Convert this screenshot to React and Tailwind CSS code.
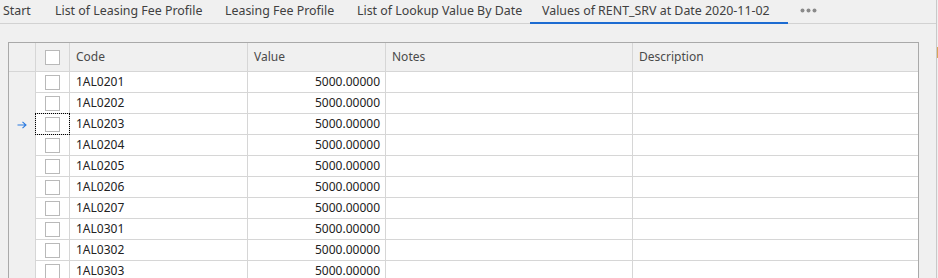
import React from "react";

const tabs = [
  { label: "Start", w: "w-[43px]", active: false },
  { label: "List of Leasing Fee Profile", w: "w-[170px]", active: false },
  { label: "Leasing Fee Profile", w: "w-[132px]", active: false },
  { label: "List of Lookup Value By Date", w: "w-[185px]", active: false },
  { label: "Values of RENT_SRV at Date 2020-11-02", w: "w-[258px]", active: true },
];

const codes = [
  "1AL0201",
  "1AL0202",
  "1AL0203",
  "1AL0204",
  "1AL0205",
  "1AL0206",
  "1AL0207",
  "1AL0301",
  "1AL0302",
  "1AL0303",
];

const CheckBox = () => (
  <div className="w-[15px] h-[15px] bg-white border border-[#b9b9b9]" />
);

const App = () => {
  return (
    <div
      className="relative w-[938px] h-[278px] overflow-hidden bg-[#f0f0f0] text-[12px] text-[#222]"
      style={{ fontFamily: '"Noto Sans", "Open Sans", sans-serif' }}
    >
      {/* Tab strip */}
      <div className="flex h-[24px] w-[936px] border-b border-[#d2d2d2]">
        {tabs.map((t, i) => (
          <div
            key={t.label}
            className={
              "relative flex items-center h-full text-[#404040] text-[12.4px] " +
              t.w +
              (i === 0 ? " pl-[3px]" : " pl-[12px]")
            }
          >
            <span className="leading-none -mt-[1px] whitespace-nowrap">{t.label}</span>
            {t.active && (
              <div className="absolute left-0 right-0 bottom-[-1px] h-[2px] bg-[#1c6bd1]" />
            )}
          </div>
        ))}
        <div className="flex items-center pl-[12px] -mt-[2px]">
          <svg width="17" height="5" viewBox="0 0 17 5">
            <circle cx="2.5" cy="2.5" r="2" fill="#8a8a8a" />
            <circle cx="8.5" cy="2.5" r="2" fill="#8a8a8a" />
            <circle cx="14.5" cy="2.5" r="2" fill="#8a8a8a" />
          </svg>
        </div>
      </div>

      {/* Right splitter edge */}
      <div className="absolute top-0 bottom-0 left-[936px] w-px bg-[#c9c9c9]" />
      <div className="absolute top-[47px] left-[937px] w-px h-[11px] bg-[#d9a55a]" />

      {/* Grid */}
      <div className="ml-[8px] mt-[18px] w-[911px] border border-[#a9a9a9] bg-white">
        {/* Header */}
        <div className="flex h-[29px] border-b border-[#d6d6d6] bg-[#f0f0f0] text-[#4a4a4a]">
          <div className="w-[27px] border-r border-[#d6d6d6]" />
          <div className="w-[34px] flex items-center justify-center border-r border-[#d6d6d6]">
            <CheckBox />
          </div>
          <div className="w-[178px] flex items-center pl-[6px] border-r border-[#d6d6d6]">
            Code
          </div>
          <div className="w-[138px] flex items-center pl-[6px] border-r border-[#d6d6d6]">
            Value
          </div>
          <div className="w-[247px] flex items-center pl-[6px] border-r border-[#d6d6d6]">
            Notes
          </div>
          <div className="flex-1 flex items-center pl-[6px]">Description</div>
        </div>

        {/* Rows */}
        {codes.map((code, i) => (
          <div key={code} className="flex h-[21px]">
            <div className="w-[27px] bg-[#f0f0f0] border-r border-[#d6d6d6] flex items-center justify-center">
              {i === 2 && (
                <svg width="10" height="8" viewBox="0 0 10 8" className="ml-[-1px]">
                  <path d="M0.5 4 H9 M5.5 0.8 L9 4 L5.5 7.2" fill="none" stroke="#2a7ae0" strokeWidth="1.1" />
                </svg>
              )}
            </div>
            <div className="flex flex-1 border-b border-[#d6d6d6]">
              <div className="relative w-[34px] flex items-center justify-center border-r border-[#d6d6d6]">
                <CheckBox />
                {i === 2 && (
                  <div className="absolute left-[-1px] right-[-1px] top-[-1px] bottom-[-1px] border border-dotted border-black" />
                )}
              </div>
              <div className="w-[178px] flex items-center pl-[6px] border-r border-[#d6d6d6]">
                {code}
              </div>
              <div className="w-[138px] flex items-center justify-end pr-[5px] border-r border-[#d6d6d6]">
                5000.00000
              </div>
              <div className="w-[247px] border-r border-[#d6d6d6]" />
              <div className="flex-1" />
            </div>
          </div>
        ))}
      </div>
    </div>
  );
};

export default App;
